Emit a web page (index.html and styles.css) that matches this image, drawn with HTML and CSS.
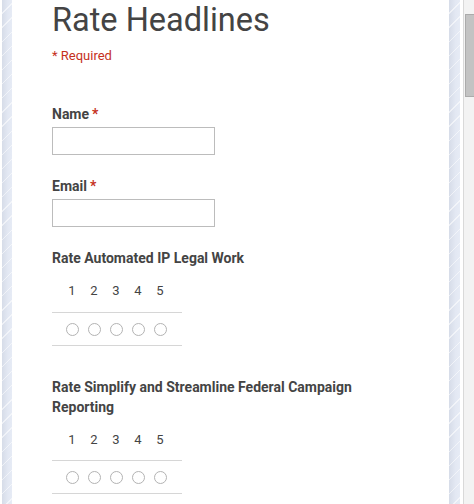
FILE: index.html
```html
<!DOCTYPE html>
<html>
<head>
<meta charset="utf-8">
<link rel="stylesheet" href="styles.css">
</head>
<body>
<div class="frame">
  <div class="gutter-left"><div class="stripe"></div></div>
  <main class="form">
    <h1 class="title">Rate Headlines</h1>
    <div class="required-note">* Required</div>

    <div class="field first">
      <label class="label">Name<span class="star">*</span></label>
      <input class="text-input" type="text">
    </div>

    <div class="field">
      <label class="label">Email<span class="star">*</span></label>
      <input class="text-input" type="text">
    </div>

    <div class="question">
      <div class="label">Rate Automated IP Legal Work</div>
      <div class="scale">
        <div class="nums"><span>1</span><span>2</span><span>3</span><span>4</span><span>5</span></div>
        <div class="radios"><span><i class="radio"></i></span><span><i class="radio"></i></span><span><i class="radio"></i></span><span><i class="radio"></i></span><span><i class="radio"></i></span></div>
      </div>
    </div>

    <div class="question second">
      <div class="label">Rate Simplify and Streamline Federal Campaign Reporting</div>
      <div class="scale">
        <div class="nums"><span>1</span><span>2</span><span>3</span><span>4</span><span>5</span></div>
        <div class="radios"><span><i class="radio"></i></span><span><i class="radio"></i></span><span><i class="radio"></i></span><span><i class="radio"></i></span><span><i class="radio"></i></span></div>
      </div>
    </div>
  </main>
  <div class="stripe right"></div>
  <div class="gap"></div>
  <div class="scrollbar"><div class="thumb"></div></div>
</div>
</body>
</html>
```

FILE: styles.css
```css
* { box-sizing: border-box; }
html, body { margin: 0; padding: 0; height: 100%; overflow: hidden; background: #fff; }
body { font-family: Roboto, "Liberation Sans", sans-serif; color: #444; }

.frame { display: flex; height: 504px; width: 474px; }

.gutter-left { width: 12px; padding-left: 2px; flex: none; }
.stripe {
  width: 10px; height: 100%;
  background:
    repeating-linear-gradient(135deg, rgba(255,255,255,0) 0 9px, rgba(255,255,255,0.55) 9px 10px),
    linear-gradient(to right, #d6dce8, #e3e8f3 60%, #e6ebf5);
}
.stripe.right { width: 11px; flex: none; }
.gap { flex: none; background: #fff; border-right: 1px solid #d9d9d9; width: 4px; }
.scrollbar { width: 10px; flex: none; background: #f3f3f3; padding-top: 14px; padding-left: 1px; }
.thumb { height: 83px; background: #c3c3c3; border: 1px solid #ababab; border-right: none; }

.form { flex: 1; padding: 0 40px; min-width: 0; }

.title { margin: 0; font-size: 32.5px; line-height: 40px; font-weight: 400; color: #444; }
.required-note { margin-top: 6px; font-size: 13px; line-height: 20px; color: #c5301c; }

.field { margin-top: 21px; }
.field.first { margin-top: 38px; }
.label { display: block; font-size: 14px; line-height: 20px; font-weight: 700; color: #444; }
.star { color: #c5301c; margin-left: 3px; }
.text-input {
  display: block; margin: 3px 0 0 0; width: 163px; height: 28px;
  border: 1px solid #bcbcbc; background: #fff; padding: 0; outline: none;
}

.question { margin-top: 21px; }
.question.second { margin-top: 31px; }

.scale { width: 130px; margin-top: 13px; }
.nums, .radios { display: flex; padding-left: 9px; }
.nums span, .radios span { width: 22px; display: flex; justify-content: center; align-items: center; }
.nums { height: 31px; padding-bottom: 11px; font-size: 13px; line-height: 20px; color: #444; }
.question.second .nums { height: 30px; padding-bottom: 10px; }
.radios { height: 34px; border-top: 1px solid #d6d6d6; border-bottom: 1px solid #d6d6d6; }
.radio {
  display: block; width: 13px; height: 13px; border-radius: 50%;
  border: 1px solid #b3b3b3; background: #fff;
}
```
